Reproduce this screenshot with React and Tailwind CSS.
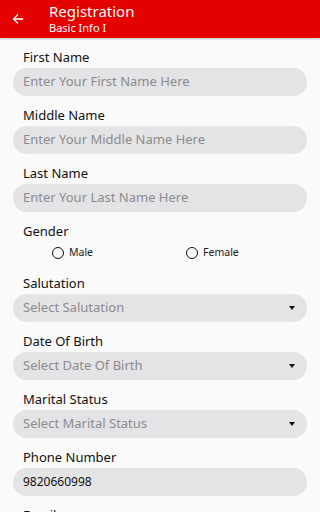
import { useState } from 'react';

const TEXT_FIELDS_TOP = [
  { label: 'First Name', placeholder: 'Enter Your First Name Here' },
  { label: 'Middle Name', placeholder: 'Enter Your Middle Name Here' },
  { label: 'Last Name', placeholder: 'Enter Your Last Name Here' },
];

const SELECTS = [
  { label: 'Salutation', placeholder: 'Select Salutation' },
  { label: 'Date Of Birth', placeholder: 'Select Date Of Birth' },
  { label: 'Marital Status', placeholder: 'Select Marital Status' },
];

function Label({ children }) {
  return <p className="pl-[10px] text-[13px] leading-[16px] text-[#111]">{children}</p>;
}

function TextField({ label, placeholder, value }) {
  return (
    <div className="mb-[11px]">
      <Label>{label}</Label>
      <div className="mt-[3px] h-[28px] rounded-full bg-[#e4e4e6] flex items-center px-[10px]">
        {value ? (
          <span className="text-[12px] text-[#111]">{value}</span>
        ) : (
          <span className="text-[13px] text-[#8b8b8d]">{placeholder}</span>
        )}
      </div>
    </div>
  );
}

function SelectField({ label, placeholder }) {
  return (
    <div className="mb-[11px]">
      <Label>{label}</Label>
      <div className="mt-[3px] h-[28px] rounded-full bg-[#e4e4e6] flex items-center justify-between pl-[10px] pr-[12px]">
        <span className="text-[13px] text-[#8b8b8d]">{placeholder}</span>
        <span className="w-0 h-0 border-l-[3px] border-r-[3px] border-t-[4px] border-l-transparent border-r-transparent border-t-[#111]" />
      </div>
    </div>
  );
}

function Radio({ label, checked, onClick, className }) {
  return (
    <button onClick={onClick} className={`flex items-center gap-[5px] ${className}`}>
      <span className="w-[12px] h-[12px] rounded-full border-[1.5px] border-[#111] flex items-center justify-center">
        {checked && <span className="w-[6px] h-[6px] rounded-full bg-[#e50000]" />}
      </span>
      <span className="text-[10.5px] text-[#222]">{label}</span>
    </button>
  );
}

export default function App() {
  const [gender, setGender] = useState(null);

  return (
    <div className="min-h-screen bg-[#fafafa]" style={{ fontFamily: '"Noto Sans", "Open Sans", sans-serif' }}>
      {/* Top bar */}
      <header className="h-[38px] bg-[#e50000] flex items-center shadow-[0_1px_2px_rgba(0,0,0,0.25)]">
        <div className="w-[49px] flex items-center pl-[12px]">
          <svg width="12" height="12" viewBox="0 0 24 24" fill="none" stroke="white" strokeWidth="2.6" strokeLinecap="square">
            <path d="M21 12H4M11 4l-8 8 8 8" />
          </svg>
        </div>
        <div className="flex flex-col text-white -mt-[1px]">
          <span className="text-[15px] leading-[19px]">Registration</span>
          <span className="text-[11px] leading-[14px]">Basic Info I</span>
        </div>
      </header>

      {/* Form */}
      <div className="px-[13px] pt-[11px]">
        {TEXT_FIELDS_TOP.map(f => <TextField key={f.label} {...f} />)}

        <div className="mb-[12px]">
          <Label>Gender</Label>
          <div className="mt-[4px] h-[20px] flex items-center">
            <Radio label="Male" checked={gender === 'm'} onClick={() => setGender('m')} className="ml-[39px]" />
            <Radio label="Female" checked={gender === 'f'} onClick={() => setGender('f')} className="ml-[93px]" />
          </div>
        </div>

        {SELECTS.map(f => <SelectField key={f.label} {...f} />)}

        <TextField label="Phone Number" value="9820660998" />
        <TextField label="Email" placeholder="Enter Your Email Here" />
      </div>
    </div>
  );
}
